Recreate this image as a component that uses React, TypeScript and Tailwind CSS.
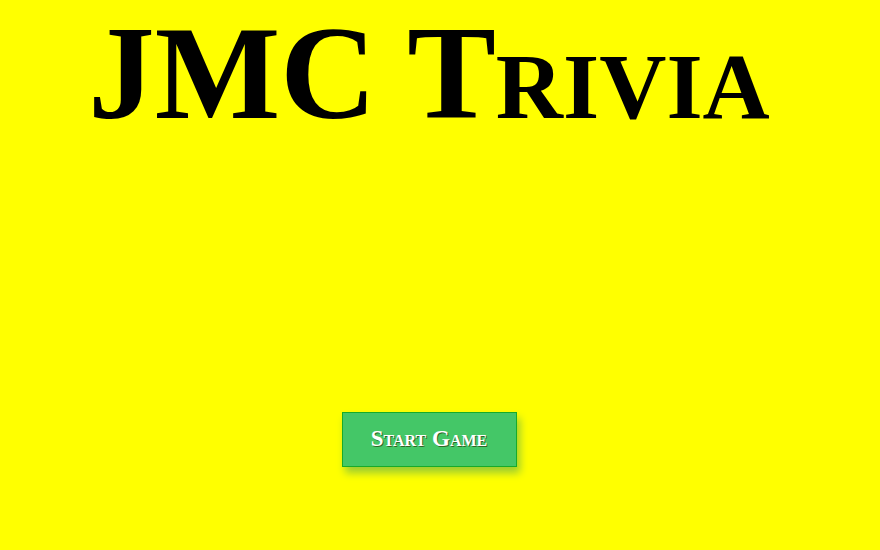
export default function App() {
  return (
    <div className="min-h-[550px] w-full bg-[#ffff00] pr-[22px] font-['Liberation_Serif',serif]">
      <h1 className="text-center text-[133px] font-bold leading-[146px] text-black [font-variant:small-caps]">
        JMC Trivia
      </h1>
      <div className="mt-[266px] flex justify-center">
        <button className="flex h-[55px] w-[175px] items-center justify-center border border-[#18ab29] bg-[#44c767] text-[23px] font-bold text-white [font-variant:small-caps] [text-shadow:1px_1px_0_#2f6627] shadow-[3px_6px_8px_#9acd32]">
          Start Game
        </button>
      </div>
    </div>
  );
}
